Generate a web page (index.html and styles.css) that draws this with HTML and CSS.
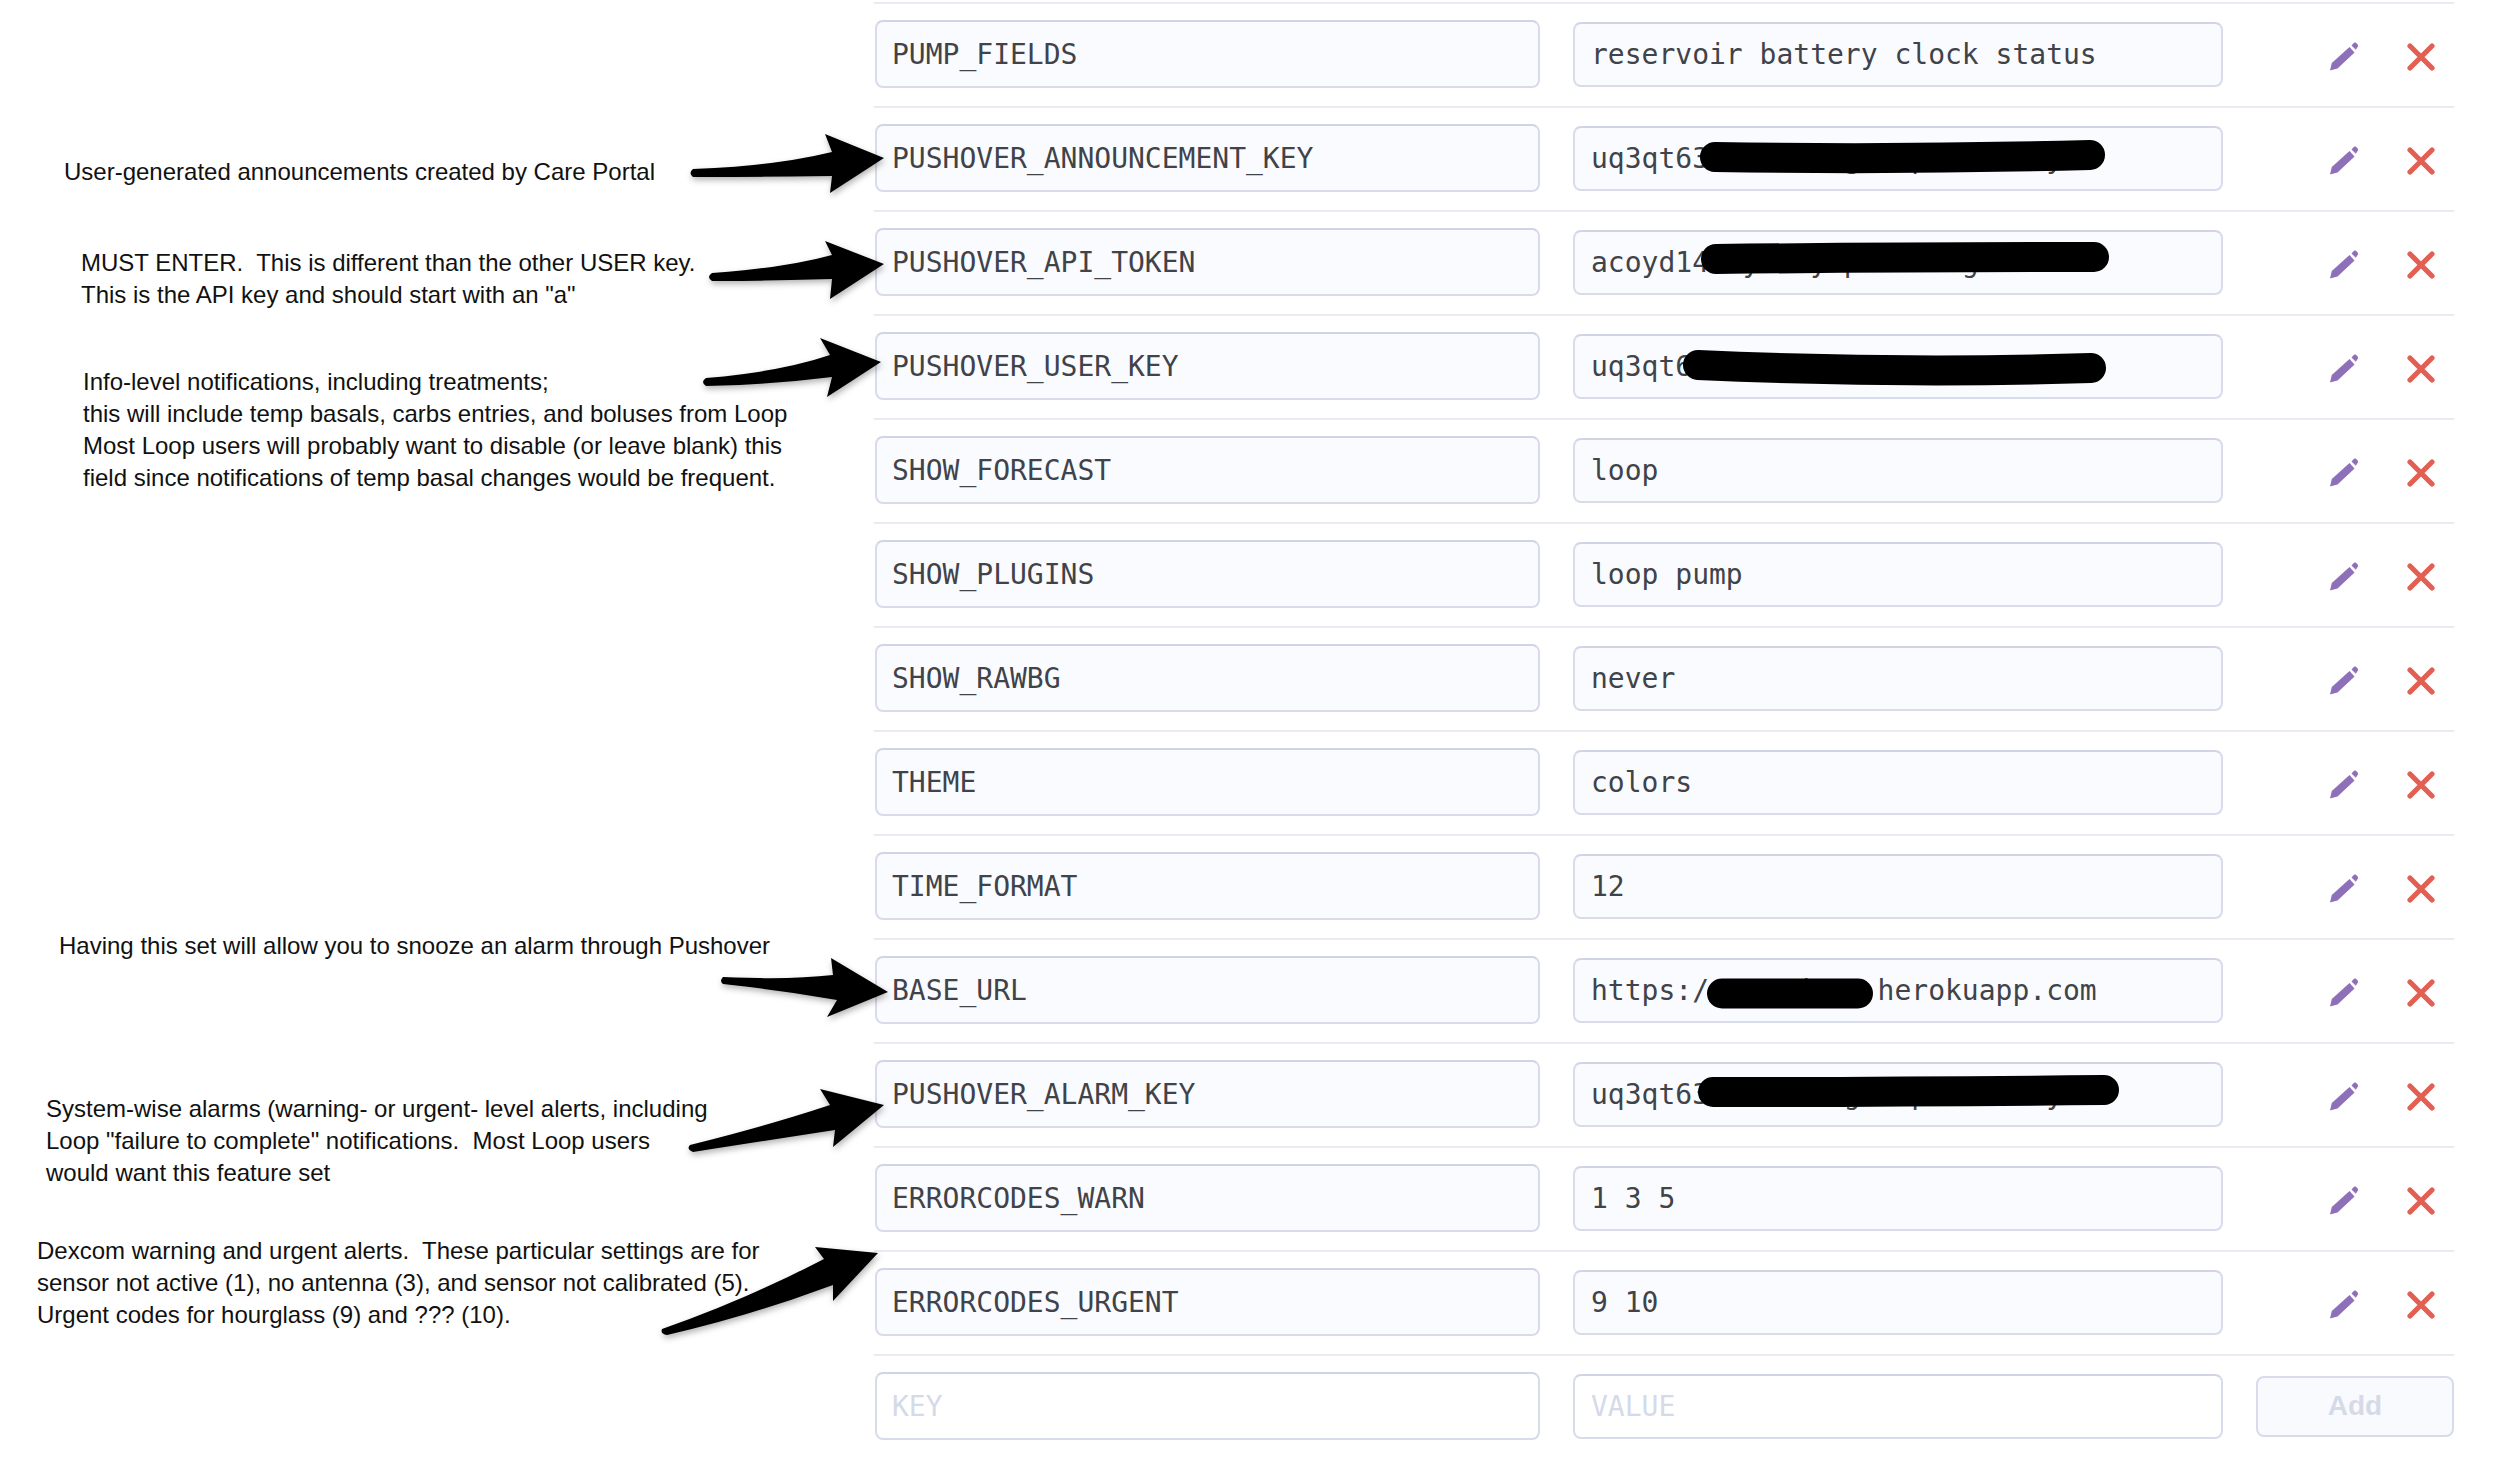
FILE: index.html
```html
<!DOCTYPE html>
<html lang="en">
<head>
    <meta charset="UTF-8">
    <title>Config Vars</title>
    <link rel="stylesheet" href="styles.css">
</head>
<body>
    <svg width="0" height="0" class="defs">
        <symbol id="pencil" viewBox="0 0 28 29">
            <path d="M0 28.5 L1.8 21 L19.5 5 L24.5 10.5 L7.5 26.5 Z"/>
            <path d="M21.5 3.5 L24 .8 Q25 0 26 .8 L27.8 2.8 Q28.5 3.8 27.7 4.8 L25.8 7.7 Z"/>
        </symbol>
        <symbol id="cross" viewBox="0 0 28 28">
            <path d="M3 3 L25 25 M25 3 L3 25" fill="none" stroke="currentColor" stroke-width="5.2" stroke-linecap="round"/>
        </symbol>
    </svg>

    <!-- Config var rows -->
    <main class="vars">
        <div class="row">
            <div class="field key">PUMP_FIELDS</div>
            <div class="field value">reservoir battery clock status</div>
            <div class="actions"><svg class="edit"><use href="#pencil"/></svg><svg class="remove"><use href="#cross"/></svg></div>
        </div>
        <div class="row">
            <div class="field key">PUSHOVER_ANNOUNCEMENT_KEY</div>
            <div class="field value">uq3qt63aaaaaaaagaaapaaaaaaayaa</div>
            <div class="actions"><svg class="edit"><use href="#pencil"/></svg><svg class="remove"><use href="#cross"/></svg></div>
        </div>
        <div class="row">
            <div class="field key">PUSHOVER_API_TOKEN</div>
            <div class="field value">acoyd14aayaaayapaaaaaagaaaaaaa</div>
            <div class="actions"><svg class="edit"><use href="#pencil"/></svg><svg class="remove"><use href="#cross"/></svg></div>
        </div>
        <div class="row">
            <div class="field key">PUSHOVER_USER_KEY</div>
            <div class="field value">uq3qt63aaaaaaaaaaaaaaaaaaaaaaa</div>
            <div class="actions"><svg class="edit"><use href="#pencil"/></svg><svg class="remove"><use href="#cross"/></svg></div>
        </div>
        <div class="row">
            <div class="field key">SHOW_FORECAST</div>
            <div class="field value">loop</div>
            <div class="actions"><svg class="edit"><use href="#pencil"/></svg><svg class="remove"><use href="#cross"/></svg></div>
        </div>
        <div class="row">
            <div class="field key">SHOW_PLUGINS</div>
            <div class="field value">loop pump</div>
            <div class="actions"><svg class="edit"><use href="#pencil"/></svg><svg class="remove"><use href="#cross"/></svg></div>
        </div>
        <div class="row">
            <div class="field key">SHOW_RAWBG</div>
            <div class="field value">never</div>
            <div class="actions"><svg class="edit"><use href="#pencil"/></svg><svg class="remove"><use href="#cross"/></svg></div>
        </div>
        <div class="row">
            <div class="field key">THEME</div>
            <div class="field value">colors</div>
            <div class="actions"><svg class="edit"><use href="#pencil"/></svg><svg class="remove"><use href="#cross"/></svg></div>
        </div>
        <div class="row">
            <div class="field key">TIME_FORMAT</div>
            <div class="field value">12</div>
            <div class="actions"><svg class="edit"><use href="#pencil"/></svg><svg class="remove"><use href="#cross"/></svg></div>
        </div>
        <div class="row">
            <div class="field key">BASE_URL</div>
            <div class="field value">https://aaaadaaa.herokuapp.com</div>
            <div class="actions"><svg class="edit"><use href="#pencil"/></svg><svg class="remove"><use href="#cross"/></svg></div>
        </div>
        <div class="row">
            <div class="field key">PUSHOVER_ALARM_KEY</div>
            <div class="field value">uq3qt63aaaaaaaagaaapaaaaaaayaa</div>
            <div class="actions"><svg class="edit"><use href="#pencil"/></svg><svg class="remove"><use href="#cross"/></svg></div>
        </div>
        <div class="row">
            <div class="field key">ERRORCODES_WARN</div>
            <div class="field value">1 3 5</div>
            <div class="actions"><svg class="edit"><use href="#pencil"/></svg><svg class="remove"><use href="#cross"/></svg></div>
        </div>
        <div class="row">
            <div class="field key">ERRORCODES_URGENT</div>
            <div class="field value">9 10</div>
            <div class="actions"><svg class="edit"><use href="#pencil"/></svg><svg class="remove"><use href="#cross"/></svg></div>
        </div>
        <div class="row">
            <div class="field key empty">KEY</div>
            <div class="field value empty">VALUE</div>
            <div class="add">Add</div>
        </div>
    </main>

    <!-- Notes written over the screenshot -->
    <p class="note note-announce">User-generated announcements created by Care Portal</p>
    <p class="note note-token">MUST ENTER.&nbsp; This is different than the other USER key.<br>This is the API key and should start with an "a"</p>
    <p class="note note-user">Info-level notifications, including treatments;<br>this will include temp basals, carbs entries, and boluses from Loop<br>Most Loop users will probably want to disable (or leave blank) this<br>field since notifications of temp basal changes would be frequent.</p>
    <p class="note note-base">Having this set will allow you to snooze an alarm through Pushover</p>
    <p class="note note-alarm">System-wise alarms (warning- or urgent- level alerts, including<br>Loop "failure to complete" notifications.&nbsp; Most Loop users<br>would want this feature set</p>
    <p class="note note-codes">Dexcom warning and urgent alerts.&nbsp; These particular settings are for<br>sensor not active (1), no antenna (3), and sensor not calibrated (5).<br>Urgent codes for hourglass (9) and ??? (10).</p>

    <!-- Arrows and the black marker scribbles -->
    <svg class="markup" width="2500" height="1464" viewBox="0 0 2500 1464">
        <g class="arrows">
            <path d="M693 169 Q775 166 832 152 L825 134 L884 158 L830 193 L832 176 Q760 177 693 177 Q688 173 693 169 Z"/>
            <path d="M712 273 Q785 268 832 255 L825 241 L884 264 L830 299 L832 279 Q770 281 712 281 Q706 277 712 273 Z"/>
            <path d="M706 378 Q780 372 830 355 L820 338 L881 362 L827 397 L832 377 Q770 385 706 386 Q700 382 706 378 Z"/>
            <path d="M723 977 Q790 980 833 975 L831 958 L888 992 L827 1017 L837 1000 Q780 990 723 984 Q719 981 723 977 Z"/>
            <path d="M690 1145 Q770 1125 830 1105 L820 1089 L884 1105 L833 1147 L835 1130 Q770 1140 693 1152 Q686 1149 690 1145 Z"/>
            <path d="M662 1329 Q745 1300 824 1259 L815 1247 L878 1253 L833 1301 L833 1285 Q750 1316 667 1335 Q660 1334 662 1329 Z"/>
        </g>
        <g class="scribbles">
            <path d="M1715 157 Q1900 160 2090 155"/>
            <path d="M1716 259 Q1900 257 2094 257"/>
            <path d="M1698 365 Q1900 374 2091 368"/>
            <path d="M1722 993.5 L1858 993.5"/>
            <path d="M1713 1092 Q1900 1092 2104 1090"/>
        </g>
    </svg>
</body>
</html>
```

FILE: styles.css
```css
* {
    box-sizing: border-box;
}

body {
    background-color: #fff;
    margin: 0;
    width: 2500px;
    height: 1464px;
    position: relative;
    overflow: hidden;
}

.defs {
    position: absolute;
}

.vars {
    width: 1580px;
    margin-left: 874px;
    padding-top: 2px;
}

.row {
    display: flex;
    align-items: center;
    height: 104px;
    padding-bottom: 2px;
    border-top: 2px solid #e8ebf4;
}

.field {
    display: flex;
    align-items: center;
    flex: none;
    background-color: #fafbfe;
    border: 2px solid #d8dcea;
    border-top-color: #d0d4e5;
    border-radius: 8px;
    color: #404349;
    font-family: "DejaVu Sans Mono", monospace;
    font-size: 28px;
    white-space: nowrap;
    overflow: hidden;
}

.key {
    width: 665px;
    height: 68px;
    margin-left: 1px;
    padding-left: 15px;
}

.value {
    width: 650px;
    height: 65px;
    margin-left: 33px;
    padding-left: 16px;
}

.empty {
    background-color: #fff;
    color: #d5dae8;
}

.actions {
    display: flex;
    align-items: center;
    margin-left: 107px;
    margin-top: 5px;
}

.edit {
    width: 28px;
    height: 29px;
    fill: #8d70b9;
}

.remove {
    width: 28px;
    height: 28px;
    margin-left: 49px;
    color: #e35f53;
}

.add {
    display: flex;
    align-items: center;
    justify-content: center;
    width: 198px;
    height: 61px;
    margin-left: 33px;
    background-color: #f9fafd;
    border: 2px solid #d8dcea;
    border-radius: 8px;
    color: #d5dae8;
    font-family: "Liberation Sans", Arial, sans-serif;
    font-size: 28px;
    font-weight: bold;
}

/* Notes sit on the free space left of the rows */
.note {
    position: absolute;
    margin: 0;
    color: #111;
    font-family: "Liberation Sans", Arial, sans-serif;
    font-size: 24px;
    line-height: 32px;
    white-space: nowrap;
}

.note-announce { left: 64px; top: 156px; }
.note-token { left: 81px; top: 247px; }
.note-user { left: 83px; top: 366px; }
.note-base { left: 59px; top: 930px; }
.note-alarm { left: 46px; top: 1093px; }
.note-codes { left: 37px; top: 1235px; }

.markup {
    position: absolute;
    top: 0;
    left: 0;
}

.arrows {
    fill: #000;
    filter: drop-shadow(1px 3px 3px rgba(0, 0, 0, 0.3));
}

.scribbles {
    fill: none;
    stroke: #000;
    stroke-width: 30px;
    stroke-linecap: round;
}
```
